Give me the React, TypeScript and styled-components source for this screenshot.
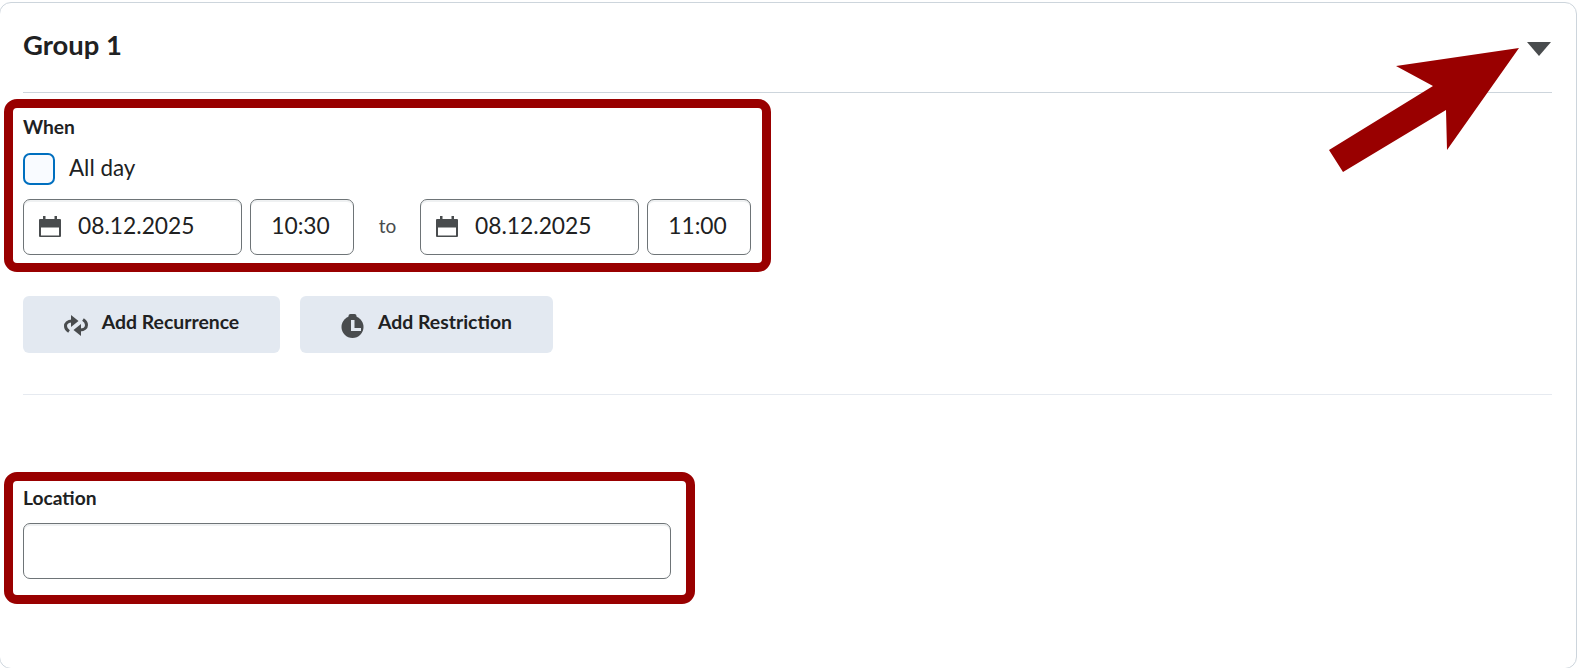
import React from 'react';
import styled, {createGlobalStyle} from 'styled-components';

const GlobalStyle = createGlobalStyle`
    html, body {
        margin: 0;
        padding: 0;
        height: 668px;
        overflow: hidden;
        background: #fff;
        font-family: Lato, "Open Sans", sans-serif;
        color: #202122;
    }
`;

const Card = styled.div`
    position: relative;
    box-sizing: border-box;
    margin: 2px 3px 0 -1px;
    height: 667px;
    padding: 0 24px 0 23px;
    border: 1px solid #cdd5dc;
    border-radius: 12px;
`;

const Header = styled.div`
    display: flex;
    align-items: center;
    justify-content: space-between;
    height: 89px;
    border-bottom: 1px solid #cdd5dc;
`;

const Title = styled.h2`
    margin: 0 0 5px;
    font-size: 27.4px;
    line-height: 30px;
    font-weight: 700;
`;

const Caret = styled.div`
    width: 0;
    height: 0;
    margin: 3px 1px 0 0;
    border-left: 12.5px solid transparent;
    border-right: 12.5px solid transparent;
    border-top: 14px solid #494c4e;
`;

const Marked = styled.div`
    position: relative;
    width: fit-content;
`;

const Highlight = styled.div<{$top: number; $right: number; $bottom: number}>`
    position: absolute;
    top: ${(props) => props.$top}px;
    left: -19px;
    right: ${(props) => props.$right}px;
    bottom: ${(props) => props.$bottom}px;
    border: 9px solid #990000;
    border-radius: 13px;
    pointer-events: none;
`;

const WhenSection = styled(Marked)`
    margin-top: 22px;
`;

const Label = styled.div`
    font-size: 19.2px;
    line-height: 24px;
    font-weight: 700;
`;

const CheckRow = styled.div`
    display: flex;
    align-items: center;
    gap: 14px;
    margin: 14px 0;
`;

const Checkbox = styled.div`
    box-sizing: border-box;
    width: 32px;
    height: 32px;
    border: 2px solid #006fbf;
    border-radius: 7px;
    background: #f9fbff;
`;

const CheckLabel = styled.span`
    margin-bottom: 2px;
    font-size: 22.4px;
    line-height: 30px;
`;

const DateRow = styled.div`
    display: flex;
    align-items: center;
`;

const Field = styled.div<{$width: number}>`
    box-sizing: border-box;
    display: flex;
    align-items: center;
    justify-content: center;
    width: ${(props) => props.$width}px;
    height: 56px;
    margin-right: 8px;
    padding-bottom: 4px;
    border: 1px solid #6e7477;
    border-radius: 7px;
    box-shadow: inset 0 2px 0 0 rgba(177, 185, 190, 0.2);
    font-size: 22.8px;
`;

const TimeField = styled(Field)`
    padding-right: 3px;
`;

const DateField = styled(Field)`
    justify-content: flex-start;
    gap: 17px;
    padding-left: 15px;
`;

const ToText = styled.span`
    width: 51px;
    margin: 0 7px 4px 0;
    text-align: center;
    font-size: 19px;
    color: #494c4e;
`;

const Buttons = styled.div`
    display: flex;
    gap: 20px;
    margin-top: 41px;
    padding-bottom: 41px;
    border-bottom: 1px solid #e6eaf0;
`;

const Button = styled.button<{$width: number}>`
    display: flex;
    align-items: center;
    justify-content: center;
    gap: 14px;
    width: ${(props) => props.$width}px;
    height: 57px;
    padding: 0 0 6px;
    border: 0;
    border-radius: 6px;
    background: #e3e9f1;
    color: #202122;
    font-family: inherit;
    font-size: 19.4px;
    font-weight: 700;
`;

const LocationSection = styled(Marked)`
    margin-top: 91px;
`;

const LocationInput = styled(Field)`
    margin: 13px 0 0;
`;

const Arrow = styled.svg`
    position: absolute;
    top: -3px;
    left: -1px;
    pointer-events: none;
`;

const FieldIcon = styled.svg`
    flex: none;
    margin-top: 3px;
`;

const ButtonIcon = styled.svg`
    flex: none;
    margin-top: 8px;
`;

const CalendarIcon = () => (
    <FieldIcon width="22" height="21" viewBox="0 0 22 21">
        <path
            fill="#494c4e"
            d="M4 0h2.500v3h9V0H18v3h3a1 1 0 0 1 1 1v16a1 1 0 0 1-1 1H1a1 1 0 0 1-1-1V4a1 1 0 0 1 1-1h3zM2 11.500v8h18v-8z"
        />
    </FieldIcon>
);

const RecurrenceIcon = () => (
    <ButtonIcon width="24" height="21" viewBox="0 0 24 21">
        <path fill="#494c4e" d="M7 0l7.500 6L7 12z" />
        <path fill="#494c4e" d="M17 9l-7.500 6 7.500 6z" />
        <path fill="none" stroke="#494c4e" strokeWidth="3" d="M8 6C3.500 6 1.500 8.500 1.500 11c0 2 1.200 4 3.500 5.500" />
        <path fill="none" stroke="#494c4e" strokeWidth="3" d="M16 15c4.500 0 6.500-2.500 6.500-5 0-2-1.200-4-3.500-5.500" />
    </ButtonIcon>
);

const RestrictionIcon = () => (
    <ButtonIcon width="23" height="24" viewBox="0 0 23 24">
        <circle cx="11.500" cy="13" r="11" fill="#494c4e" />
        <rect x="7.500" y="0" width="8" height="6" rx="2" fill="#494c4e" />
        <path fill="#e3e9f1" d="M10 6h3.500v8H20v3H10z" />
    </ButtonIcon>
);

const App = () => {
    return (
        <>
            <GlobalStyle />
            <Card>
                <Header>
                    <Title>Group 1</Title>
                    <Caret />
                </Header>
                <WhenSection>
                    <Highlight $top={-16} $right={-12} $bottom={-17} />
                    <Label>When</Label>
                    <CheckRow>
                        <Checkbox />
                        <CheckLabel>All day</CheckLabel>
                    </CheckRow>
                    <DateRow>
                        <DateField $width={219}><CalendarIcon />08.12.2025</DateField>
                        <TimeField $width={104}>10:30</TimeField>
                        <ToText>to</ToText>
                        <DateField $width={219}><CalendarIcon />08.12.2025</DateField>
                        <TimeField $width={104}>11:00</TimeField>
                    </DateRow>
                </WhenSection>
                <Buttons>
                    <Button $width={257}><RecurrenceIcon />Add Recurrence</Button>
                    <Button $width={253}><RestrictionIcon />Add Restriction</Button>
                </Buttons>
                <LocationSection>
                    <Highlight $top={-14} $right={-24} $bottom={-25} />
                    <Label>Location</Label>
                    <LocationInput $width={648} />
                </LocationSection>
                <Arrow width="1580" height="668" viewBox="0 0 1580 668">
                    <polygon
                        fill="#990000"
                        points="1520,48 1397,66 1434,86 1330,150 1344,172 1447,110 1448,150"
                    />
                </Arrow>
            </Card>
        </>
    );
};

export default App;
